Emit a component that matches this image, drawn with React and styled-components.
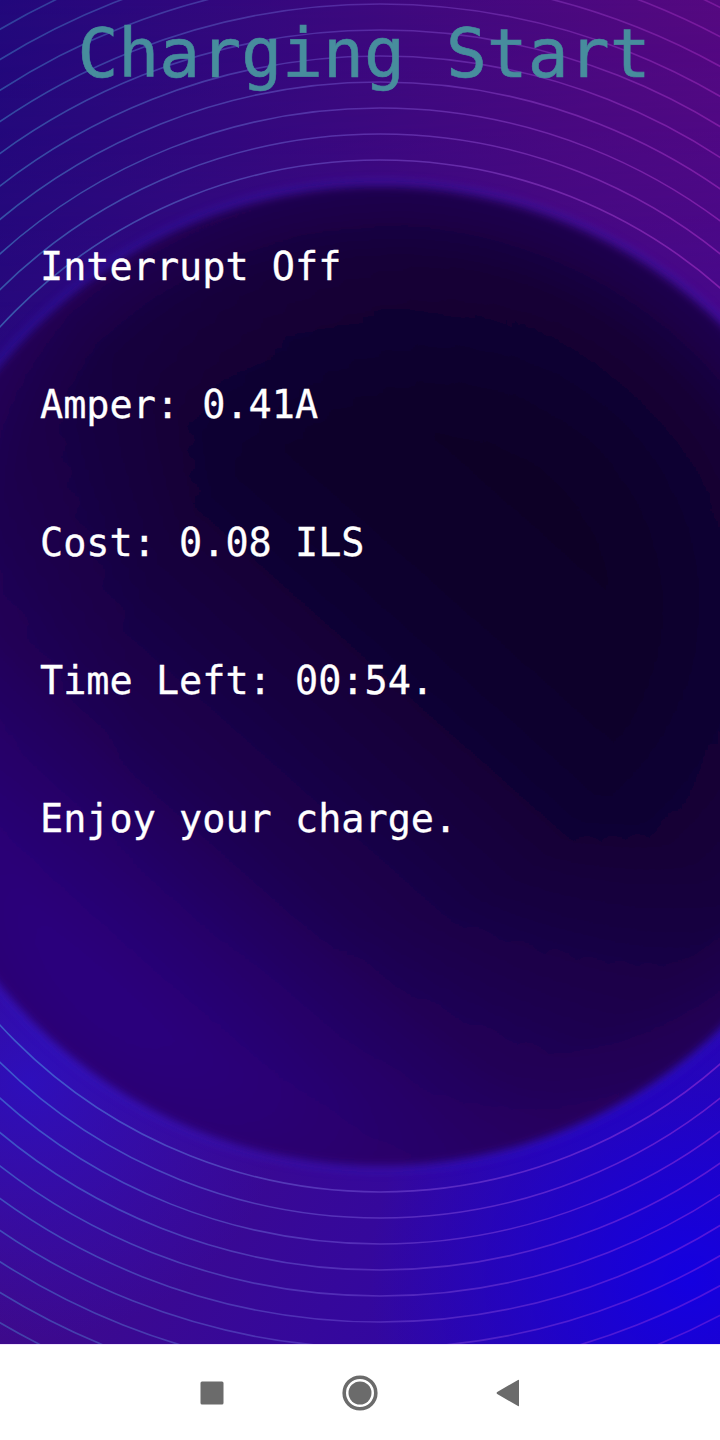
import React from 'react';
import styled, { createGlobalStyle } from 'styled-components';

const GlobalStyle = createGlobalStyle`
  html, body {
    margin: 0;
    padding: 0;
    background: #ffffff;
  }
`;

const Screen = styled.div`
  width: 720px;
  height: 1440px;
  display: flex;
  flex-direction: column;
  overflow: hidden;
`;

const Stage = styled.div`
  position: relative;
  height: 1344px;
  flex: none;
  overflow: hidden;
  background: #2a0a80;
`;

const Backdrop = styled.svg`
  position: absolute;
  inset: 0;
  width: 720px;
  height: 1344px;
  display: block;
`;

const Content = styled.div`
  position: relative;
  display: flex;
  flex-direction: column;
  padding: 14px 0 0 40px;
`;

const Title = styled.h1`
  margin: 0 0 151px -40px;
  padding-left: 8px;
  font-family: "DejaVu Sans Mono", "Liberation Mono", monospace;
  font-weight: normal;
  font-size: 68px;
  line-height: 80px;
  color: #478d9d;
  text-align: center;
  white-space: pre;
  -webkit-text-stroke: 0.6px #478d9d;
`;

const Lines = styled.div`
  display: flex;
  flex-direction: column;
  gap: 94px;
`;

const Line = styled.p`
  margin: 0;
  font-family: "DejaVu Sans Mono", "Liberation Mono", monospace;
  font-size: 38.5px;
  line-height: 44px;
  color: #ffffff;
  white-space: pre;
  -webkit-text-stroke: 0.3px #ffffff;
`;

const NavBar = styled.nav`
  flex: 1;
  background: #ffffff;
  border-top: 1px solid #f1e4ff;
  display: flex;
  align-items: center;
  justify-content: center;
  gap: 112px;
`;

const NavButton = styled.div`
  width: 36px;
  height: 36px;
  display: flex;
  align-items: center;
  justify-content: center;
`;

const RINGS = Array.from({ length: 44 }, (_, i) => 490 + (i + 1) * 26);

function Background() {
  return (
    <Backdrop viewBox="0 0 720 1344" preserveAspectRatio="none">
      <defs>
        <linearGradient id="bg" x1="0" y1="0" x2="1" y2="1">
          <stop offset="0" stopColor="#24087a" />
          <stop offset="0.45" stopColor="#3f0a88" />
          <stop offset="1" stopColor="#2a06b0" />
        </linearGradient>
        <linearGradient id="bgTop" x1="0" y1="0" x2="1" y2="0">
          <stop offset="0" stopColor="#22087c" stopOpacity="0.9" />
          <stop offset="1" stopColor="#58087f" stopOpacity="0.9" />
        </linearGradient>
        <radialGradient id="blueSpot" cx="690" cy="1280" r="320" gradientUnits="userSpaceOnUse">
          <stop offset="0" stopColor="#1400e0" stopOpacity="1" />
          <stop offset="1" stopColor="#1400e0" stopOpacity="0" />
        </radialGradient>
        <radialGradient id="leftBlue" cx="30" cy="1080" r="260" gradientUnits="userSpaceOnUse">
          <stop offset="0" stopColor="#2a10c8" stopOpacity="0.8" />
          <stop offset="1" stopColor="#2a10c8" stopOpacity="0" />
        </radialGradient>
        <linearGradient id="topFade" x1="0" y1="0" x2="0" y2="1">
          <stop offset="0" stopColor="#fff" stopOpacity="1" />
          <stop offset="0.45" stopColor="#fff" stopOpacity="0" />
        </linearGradient>
        <mask id="topMask">
          <rect width="720" height="1344" fill="url(#topFade)" />
        </mask>
        <linearGradient id="ring" x1="0" y1="0" x2="720" y2="0" gradientUnits="userSpaceOnUse">
          <stop offset="0" stopColor="#4fd0f0" />
          <stop offset="0.5" stopColor="#8a6ce8" />
          <stop offset="1" stopColor="#d040e0" />
        </linearGradient>
        <linearGradient id="disc" x1="660" y1="400" x2="40" y2="1100" gradientUnits="userSpaceOnUse">
          <stop offset="0" stopColor="#0a0022" />
          <stop offset="0.35" stopColor="#0e002e" />
          <stop offset="0.65" stopColor="#1e0052" />
          <stop offset="1" stopColor="#3408a8" />
        </linearGradient>
        <radialGradient id="discEdge" cx="380" cy="676" r="490" gradientUnits="userSpaceOnUse">
          <stop offset="0" stopColor="#2a0064" stopOpacity="0" />
          <stop offset="0.5" stopColor="#2a0064" stopOpacity="0" />
          <stop offset="0.85" stopColor="#2a0064" stopOpacity="0.3" />
          <stop offset="1" stopColor="#2a0064" stopOpacity="0.7" />
        </radialGradient>
        <filter id="soft" x="-10%" y="-10%" width="120%" height="120%">
          <feGaussianBlur stdDeviation="4" />
        </filter>
      </defs>
      <rect width="720" height="1344" fill="url(#bg)" />
      <rect width="720" height="1344" fill="url(#bgTop)" mask="url(#topMask)" />
      <rect width="720" height="1344" fill="url(#leftBlue)" />
      <rect width="720" height="1344" fill="url(#blueSpot)" />
      <g fill="none" stroke="url(#ring)" strokeWidth="1.6">
        {RINGS.map((r, i) => (
          <circle
            key={r}
            cx="380"
            cy="676"
            r={r}
            strokeOpacity={Math.max(0.1, 0.4 - i * 0.012)}
          />
        ))}
      </g>
      <circle cx="380" cy="676" r="497" fill="#3a1ad0" opacity="0.3" filter="url(#soft)" />
      <g filter="url(#soft)">
        <circle cx="380" cy="676" r="490" fill="url(#disc)" />
        <circle cx="380" cy="676" r="490" fill="url(#discEdge)" />
      </g>
    </Backdrop>
  );
}

function SquareIcon() {
  return (
    <svg width="24" height="24" viewBox="0 0 24 24">
      <rect x="0.5" y="0.5" width="23" height="23" rx="1.5" fill="#6b6b6b" />
    </svg>
  );
}

function HomeIcon() {
  return (
    <svg width="36" height="36" viewBox="0 0 36 36">
      <circle cx="18" cy="18" r="15.8" fill="none" stroke="#6b6b6b" strokeWidth="3.6" />
      <circle cx="18" cy="18" r="11.5" fill="#6b6b6b" />
    </svg>
  );
}

function BackIcon() {
  return (
    <svg width="24" height="28" viewBox="0 0 24 28">
      <path d="M23 1.5 L23 26.5 Q23 27.6 22 27 L1.2 15 Q0 14 1.2 13 L22 1 Q23 0.4 23 1.5 Z" fill="#6b6b6b" />
    </svg>
  );
}

const lines = [
  'Interrupt Off',
  'Amper: 0.41A',
  'Cost: 0.08 ILS',
  'Time Left: 00:54.',
  'Enjoy your charge.',
];

export default function App() {
  return (
    <Screen>
      <GlobalStyle />
      <Stage>
        <Background />
        <Content>
          <Title>Charging Start</Title>
          <Lines>
            {lines.map((text) => (
              <Line key={text}>{text}</Line>
            ))}
          </Lines>
        </Content>
      </Stage>
      <NavBar>
        <NavButton>
          <SquareIcon />
        </NavButton>
        <NavButton>
          <HomeIcon />
        </NavButton>
        <NavButton>
          <BackIcon />
        </NavButton>
      </NavBar>
    </Screen>
  );
}
